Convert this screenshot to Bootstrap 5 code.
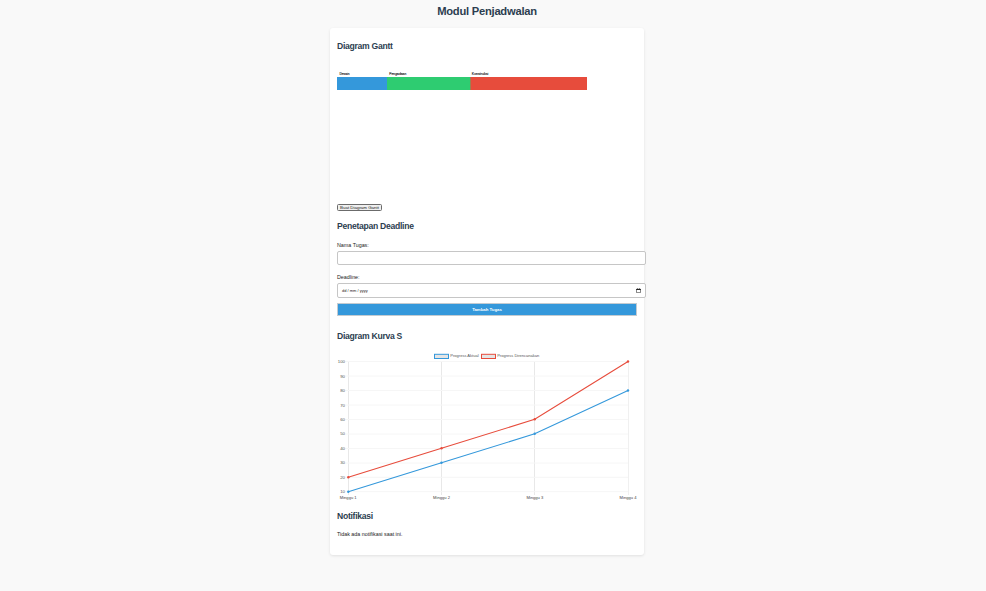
<!DOCTYPE html>
<html lang="id">
<head>
<meta charset="utf-8">
<meta name="viewport" content="width=device-width, initial-scale=1">
<title>Modul Penjadwalan</title>
<link href="https://cdn.jsdelivr.net/npm/bootstrap@5.3.0/dist/css/bootstrap.min.css" rel="stylesheet">
<style>
body{background:#f9f9f9;color:#222;font-family:"Liberation Sans",Arial,sans-serif;font-size:5.35px;line-height:8px;height:591px;overflow:hidden}
h1,h2{color:#2c3e50;font-weight:700;margin:0}
h1{font-size:11.2px;letter-spacing:-.24px;line-height:12px;padding:5px 12px 0 0;height:28px}
h2{font-size:8.6px;letter-spacing:-.28px;line-height:10px}
.panel{width:314px;height:527px;margin-left:330px;padding:13px 7px 0;background:#fff;border-radius:3px;box-shadow:0 1px 3px rgba(0,0,0,.1)}
svg{display:block}
svg text{font-family:"Liberation Sans",Arial,sans-serif}
.gantt{margin-top:13px;height:140px}
.make{width:45px;height:7px;border:1px solid #6b6b6b;border-radius:1.5px;background:#efefef;color:#222;font-size:4.4px;line-height:5px;padding:0;white-space:nowrap}
.deadline-title{margin-top:10px}
.field-label{font-size:5.35px;line-height:8px;margin:8px 0 2px}
.name-label{margin-top:10px}
.field{width:309px;height:14px;border:1px solid #c6c6c6;border-radius:2px;background:#fff;padding:0 4px;font-size:4px;color:#222}
.date-field{height:15px}
.add{width:300px;height:13px;margin-top:5px;border:1px solid #c3cbd1;background:#3498db;color:#fff;font-size:4.3px;line-height:11px;padding:0;font-weight:700}
.curve-title{margin-top:15px}
.curve{margin-top:9px}
.notice-title{margin-top:10px}
.notice{padding-top:9px}
</style>
</head>
<body>
<h1 class="text-center">Modul Penjadwalan</h1>
<main class="panel">
  <section>
    <h2>Diagram Gantt</h2>
    <svg class="gantt" width="300" height="140" viewBox="337 64 300 140">
      <rect x="337" y="77" width="50" height="13" fill="#3498db"/>
      <rect x="387" y="77" width="84" height="13" fill="#2ecc71"/>
      <rect x="470.4" y="77" width="116.6" height="13" fill="#e74c3c"/>
      <g font-size="4" fill="#000" stroke="#000" stroke-width=".1">
        <text x="339.5" y="75" textLength="10" lengthAdjust="spacingAndGlyphs">Desain</text>
        <text x="389.3" y="75" textLength="17" lengthAdjust="spacingAndGlyphs">Pengadaan</text>
        <text x="471.8" y="75" textLength="16.5" lengthAdjust="spacingAndGlyphs">Konstruksi</text>
      </g>
    </svg>
    <button class="make d-block">Buat Diagram Gantt</button>
  </section>
  <section>
    <h2 class="deadline-title">Penetapan Deadline</h2>
    <div class="field-label name-label">Nama Tugas:</div>
    <div class="field"></div>
    <div class="field-label">Deadline:</div>
    <div class="field date-field d-flex align-items-center justify-content-between">
      <span>dd / mm / yyyy</span>
      <svg width="5" height="5" viewBox="0 0 5 5"><path d="M.5 1.2h4v3.4h-4z" fill="none" stroke="#333" stroke-width=".6"/><path d="M.2 1h4.6v1H.2zM1 .2h.6v1H1zM3.4.2H4v1h-.6z" fill="#222"/></svg>
    </div>
    <button class="add d-block">Tambah Tugas</button>
  </section>
  <section>
    <h2 class="curve-title">Diagram Kurva S</h2>
    <svg class="curve" width="307" height="151" viewBox="337 350 307 151">
      <g stroke="#e8e8e8" stroke-width="1">
        <path d="M348.5 361v134M441.5 361v134M534.5 361v134"/>
        <path stroke="#f0f0f0" d="M628.5 361v134"/>
        <path stroke="#f6f6f6" d="M345 361.5h283M345 376h283M345 390.5h283M345 405h283M345 419.5h283M345 434h283M345 448.5h283M345 463h283M345 477.3h283M345 491.7h283"/>
      </g>
      <g fill="none" stroke-width="1.1">
        <path stroke="#3498db" d="M348.3 491.7 441.5 462.7 534.7 433.8 628 390.5"/>
        <path stroke="#e74c3c" d="M348.3 477.2 441.5 448.3 534.7 419.3 628 361.5"/>
      </g>
      <g fill="#3498db"><circle cx="348.3" cy="491.7" r="1.2"/><circle cx="441.5" cy="462.7" r="1.2"/><circle cx="534.7" cy="433.8" r="1.2"/><circle cx="628" cy="390.5" r="1.2"/></g>
      <g fill="#e74c3c"><circle cx="348.3" cy="477.2" r="1.2"/><circle cx="441.5" cy="448.3" r="1.2"/><circle cx="534.7" cy="419.3" r="1.2"/><circle cx="628" cy="361.5" r="1.2"/></g>
      <g fill="#e5e5e5" stroke-width="1"><rect x="434.5" y="354.3" width="14" height="4.2" stroke="#3498db"/><rect x="481.5" y="354.3" width="14" height="4.2" stroke="#e74c3c"/></g>
      <g font-size="4.3" fill="#555">
        <text x="450.3" y="357.4" textLength="28.3" lengthAdjust="spacingAndGlyphs">Progress Aktual</text>
        <text x="497.2" y="357.4" textLength="42" lengthAdjust="spacingAndGlyphs">Progress Direncanakan</text>
        <g text-anchor="end">
          <text x="345" y="363">100</text><text x="345" y="377.5">90</text><text x="345" y="392">80</text><text x="345" y="406.5">70</text><text x="345" y="421">60</text><text x="345" y="435.4">50</text><text x="345" y="450">40</text><text x="345" y="464.3">30</text><text x="345" y="478.8">20</text><text x="345" y="493.3">10</text>
        </g>
        <g text-anchor="middle" fill="#444" font-size="4.1"><text x="348.2" y="499">Minggu 1</text><text x="441.5" y="499">Minggu 2</text><text x="534.8" y="499">Minggu 3</text><text x="628" y="499">Minggu 4</text></g>
      </g>
    </svg>
  </section>
  <section>
    <h2 class="notice-title">Notifikasi</h2>
    <p class="notice m-0">Tidak ada notifikasi saat ini.</p>
  </section>
</main>
<script src="https://cdn.jsdelivr.net/npm/bootstrap@5.3.0/dist/js/bootstrap.bundle.min.js"></script>
</body>
</html>
